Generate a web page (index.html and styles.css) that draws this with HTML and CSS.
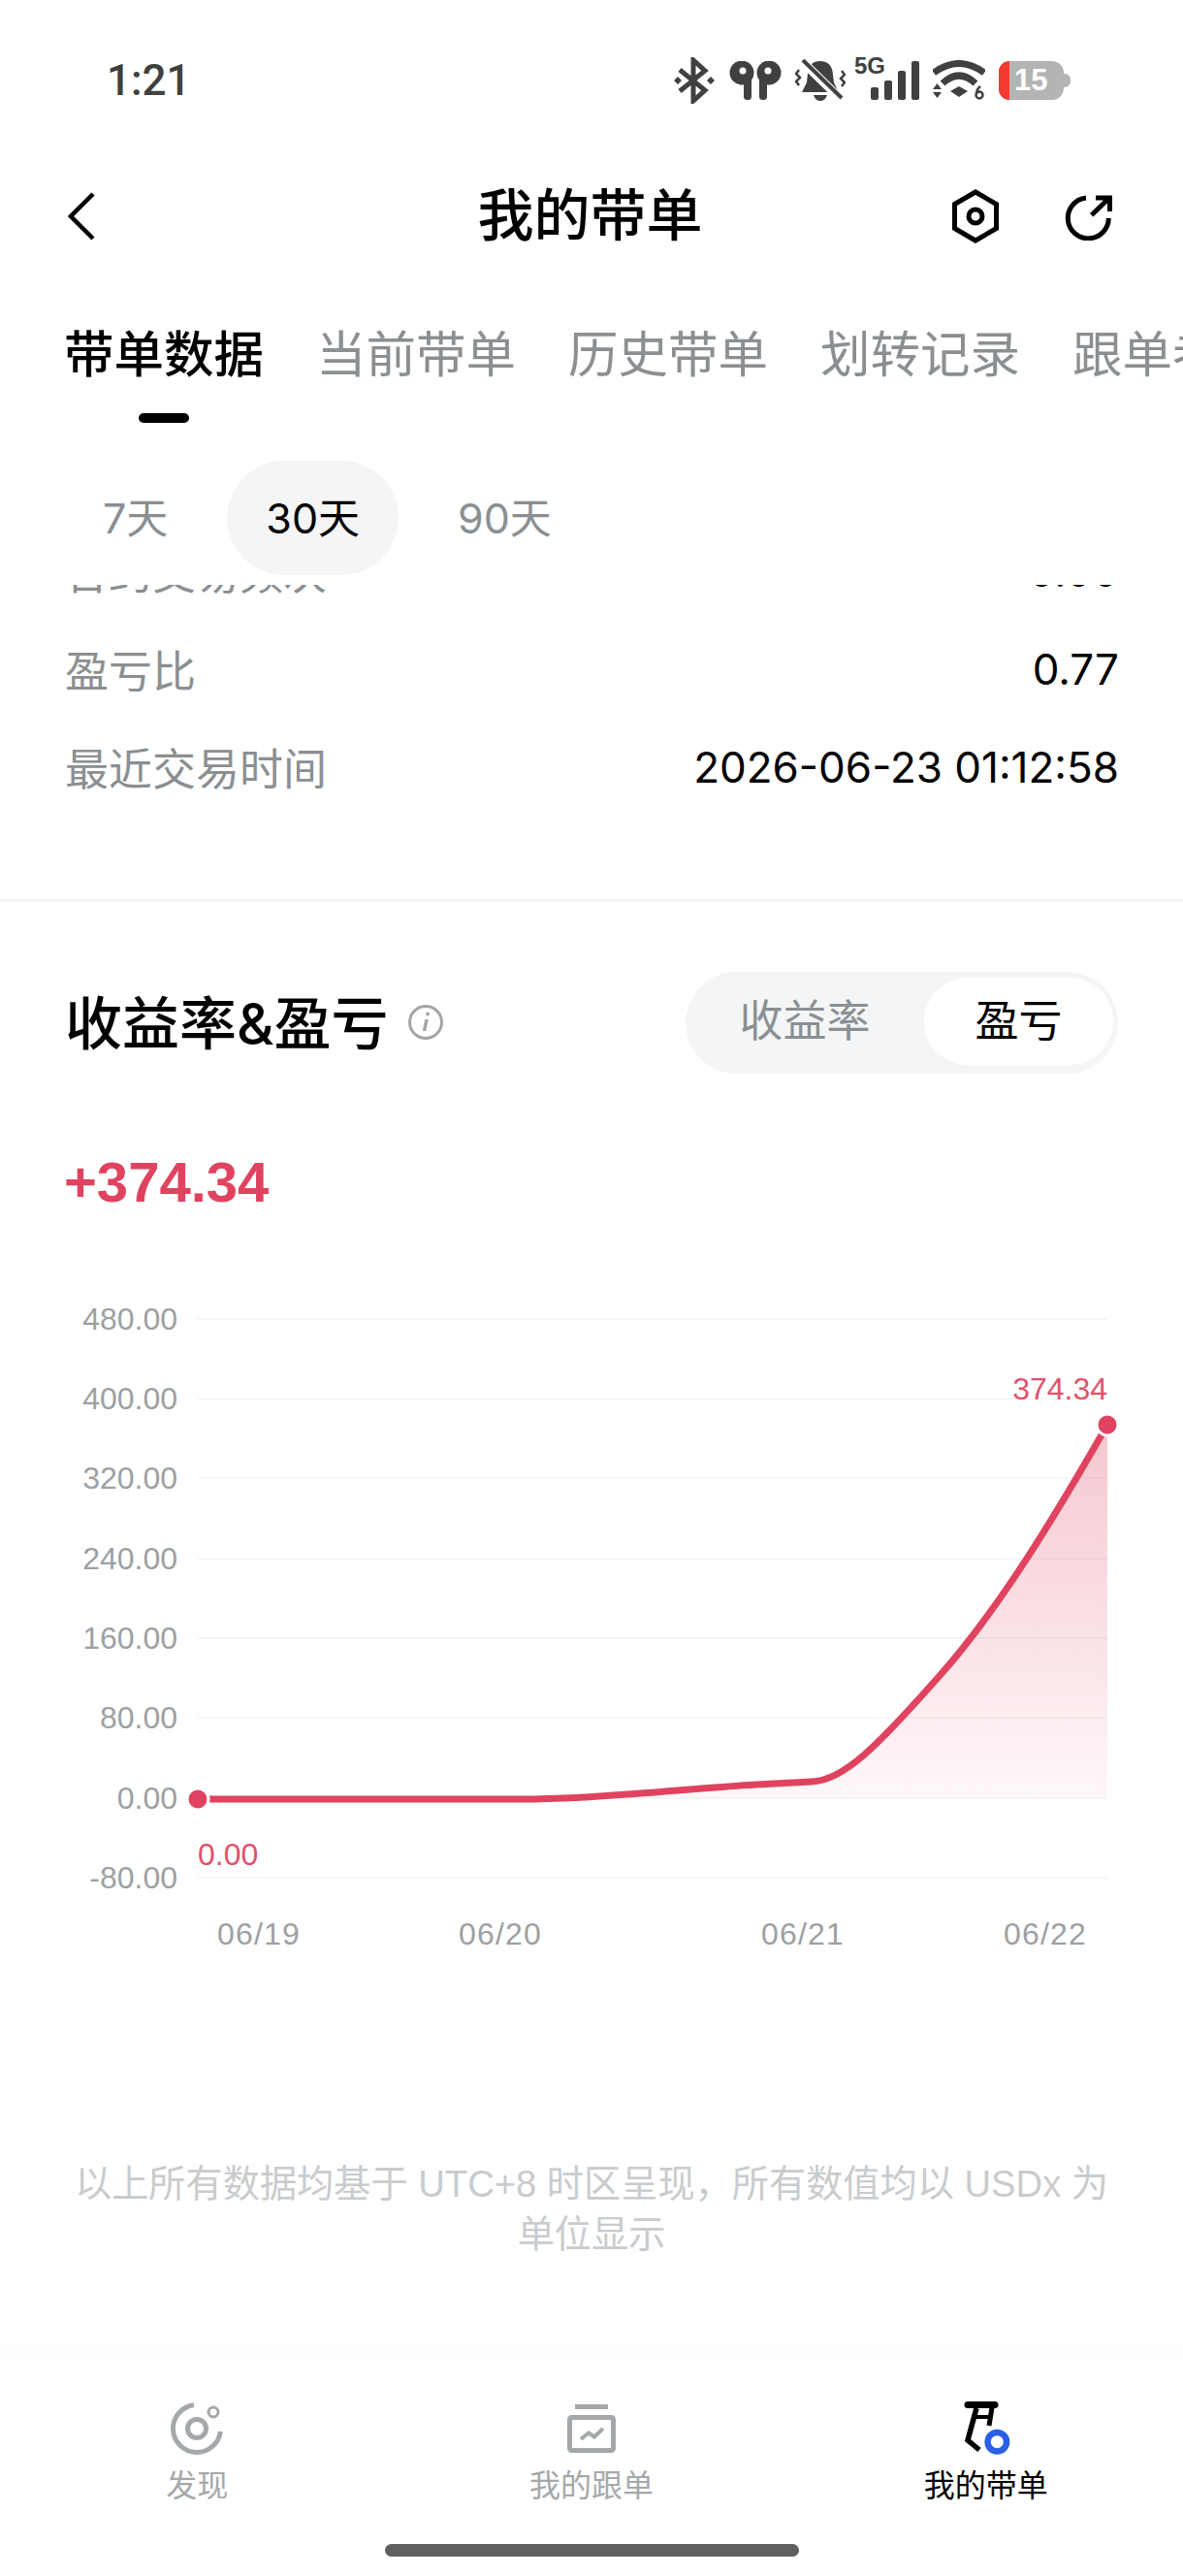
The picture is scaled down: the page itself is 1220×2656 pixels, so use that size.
FILE: index.html
```html
<!DOCTYPE html>
<html lang="zh-CN">
<head>
    <meta charset="UTF-8">
    <title>我的带单</title>
    <link rel="stylesheet" href="styles.css">
</head>
<body>

<div class="status-bar">
    <span class="status-time">1:21</span>
    <div class="status-icons">
        <svg width="44" height="48" viewBox="0 0 44 48" fill="none" stroke="#404040" stroke-width="5">
            <path d="M7 13 L33 34 L21 45 V3 L33 14 L7 35"/>
            <path d="M1 24 l4 -4 l4 4 l-4 4z M35 24 l4 -4 l4 4 l-4 4z" fill="#404040" stroke="none"/>
        </svg>
        <svg width="54" height="40" viewBox="0 0 54 40" fill="#404040">
            <circle cx="13" cy="12" r="12.500"/>
            <rect x="15" y="8" width="8" height="32" rx="3.500"/>
            <circle cx="41" cy="12" r="12.500"/>
            <rect x="31" y="8" width="8" height="32" rx="3.500"/>
            <circle cx="14" cy="10" r="3.500" fill="#fff"/>
            <circle cx="40" cy="10" r="3.500" fill="#fff"/>
        </svg>
        <svg width="52" height="44" viewBox="0 0 52 44" fill="none">
            <path d="M26 2 q12 0 13 14 l1 8 l5 10 h-38 l5 -10 l1 -9 q1 -13 13 -13z" fill="#404040"/>
            <path d="M19 37 h14 q-2 6 -7 6 q-5 0 -7 -6z" fill="#404040"/>
            <path d="M6 1 L46 40" stroke="#fff" stroke-width="9"/>
            <path d="M8 1 L48 40" stroke="#404040" stroke-width="4"/>
            <path d="M4 11 l-3 4 l4 4 l-4 4 l3 4 M48 12 l3 4 l-4 4 l4 4 l-3 4" stroke="#404040" stroke-width="2.500"/>
        </svg>
        <div class="signal">
            <span class="signal-label">5G</span>
            <svg width="50" height="40" viewBox="0 0 50 40" fill="#404040">
                <rect x="0" y="27" width="8" height="13" rx="2"/>
                <rect x="14" y="20" width="8" height="20" rx="2"/>
                <rect x="28" y="10" width="8" height="30" rx="2"/>
                <rect x="42" y="0" width="8" height="40" rx="2"/>
            </svg>
        </div>
        <svg width="54" height="42" viewBox="0 0 54 42" fill="none" stroke="#404040" stroke-width="7">
            <path d="M1 13 Q27 -6 53 13"/>
            <path d="M10 24 Q27 8 44 24"/>
            <path d="M18 32 L27 27 L36 32 L27 38Z" fill="#404040" stroke="none"/>
            <path d="M0 30 l4.500 -6 l4.500 6z M0 33 l4.500 6 l4.500 -6z" fill="#404040" stroke="none"/>
            <circle cx="48" cy="36" r="3.500" stroke-width="2.500"/>
            <path d="M45 35 q0 -5 4 -8" stroke-width="2.500"/>
        </svg>
        <div class="battery"><span class="battery-low"></span><span class="battery-num">15</span></div>
    </div>
</div>

<div class="nav-bar">
    <svg class="nav-back" width="28" height="50" viewBox="0 0 28 50" fill="none" stroke="#000" stroke-width="4.500">
        <path d="M26 2 L3 25 L26 48"/>
    </svg>
    <h1 class="nav-title">我的带单</h1>
    <div class="nav-actions">
        <svg width="50" height="56" viewBox="0 0 50 56" fill="none" stroke="#000" stroke-width="5">
            <path d="M25 3 L46.500 15.500 V40.500 L25 53 L3.500 40.500 V15.500 Z"/>
            <circle cx="25" cy="28" r="7"/>
        </svg>
        <svg width="50" height="50" viewBox="0 0 50 50" fill="none" stroke="#000" stroke-width="5">
            <path d="M23 6 A21 21 0 1 0 46.300 27"/>
            <path d="M28.700 23.700 L46 7 M33 6 H47.500 V20"/>
        </svg>
    </div>
</div>

<div class="tabs">
    <div class="tab tab-active">带单数据</div>
    <div class="tab">当前带单</div>
    <div class="tab">历史带单</div>
    <div class="tab">划转记录</div>
    <div class="tab">跟单者</div>
</div>

<div class="range">
    <div class="range-item">7天</div>
    <div class="range-item range-active">30天</div>
    <div class="range-item">90天</div>
</div>

<div class="scroll">
    <div class="stats">
        <div class="stat-row"><span class="stat-label">合约交易频次</span><span class="stat-value">0.00</span></div>
        <div class="stat-row"><span class="stat-label">盈亏比</span><span class="stat-value">0.77</span></div>
        <div class="stat-row"><span class="stat-label">最近交易时间</span><span class="stat-value">2026-06-23 01:12:58</span></div>
    </div>

    <div class="section">
        <div class="section-head">
            <h2 class="section-title">收益率&amp;盈亏</h2>
            <svg class="info-icon" width="38" height="38" viewBox="0 0 38 38" fill="none" stroke="#a3a6a8" stroke-width="3">
                <circle cx="19" cy="19" r="16.500"/>
                <path d="M20 16 L17.500 28" stroke-width="3.500"/>
                <circle cx="21" cy="10.500" r="2" fill="#a3a6a8" stroke="none"/>
            </svg>
            <div class="switch">
                <span class="switch-item">收益率</span>
                <span class="switch-item switch-active">盈亏</span>
            </div>
        </div>
        <div class="profit">+374.34</div>

        <svg class="chart" width="1220" height="700" viewBox="0 1320 1220 700">
            <defs>
                <linearGradient id="areaFill" x1="0" y1="0" x2="0" y2="1">
                    <stop offset="0" stop-color="#e0435f" stop-opacity="0.30"/>
                    <stop offset="1" stop-color="#e0435f" stop-opacity="0.04"/>
                </linearGradient>
            </defs>
            <g stroke="#f5f6f7" stroke-width="2">
                <path d="M204 1360 H1142"/>
                <path d="M204 1442 H1142"/>
                <path d="M204 1524 H1142"/>
                <path d="M204 1607 H1142"/>
                <path d="M204 1689 H1142"/>
                <path d="M204 1771 H1142"/>
                <path d="M204 1854 H1142"/>
                <path d="M204 1936 H1142"/>
            </g>
            <g class="axis-y" text-anchor="end">
                <text x="183" y="1371">480.00</text>
                <text x="183" y="1453">400.00</text>
                <text x="183" y="1535">320.00</text>
                <text x="183" y="1618">240.00</text>
                <text x="183" y="1700">160.00</text>
                <text x="183" y="1782">80.00</text>
                <text x="183" y="1865">0.00</text>
                <text x="183" y="1947">-80.00</text>
            </g>
            <g class="axis-x" text-anchor="middle">
                <text x="267" y="2005">06/19</text>
                <text x="516" y="2005">06/20</text>
                <text x="828" y="2005">06/21</text>
                <text x="1078" y="2005">06/22</text>
            </g>
            <path fill="url(#areaFill)" d="M545 1854 C620 1854 720 1843 780 1840 C800 1839 820 1838 837 1837 C870 1836 905 1800 967 1730 C1030 1660 1090 1560 1142 1469 V1854 Z"/>
            <path fill="none" stroke="#e0435f" stroke-width="7" d="M213 1855 H545 C620 1855 720 1843 780 1840 C800 1839 820 1838 837 1837 C870 1836 905 1800 967 1730 C1030 1660 1090 1560 1142 1469"/>
            <circle cx="204" cy="1855" r="11" fill="#e0435f" stroke="#fff" stroke-width="3"/>
            <circle cx="1142" cy="1469" r="11" fill="#e0435f" stroke="#fff" stroke-width="3"/>
            <text class="chart-mark" x="1142" y="1443" text-anchor="end">374.34</text>
            <text class="chart-mark" x="204" y="1923">0.00</text>
        </svg>

        <p class="note">以上所有数据均基于 UTC+8 时区呈现，所有数值均以 USDx 为单位显示</p>
    </div>
</div>

<div class="bottom-nav">
    <div class="bottom-item">
        <svg width="60" height="60" viewBox="0 0 60 60" fill="none" stroke="#a5a8aa" stroke-width="5">
            <path d="M27 5.700 A24.500 24.500 0 1 0 54.300 33"/>
            <circle cx="30" cy="30" r="9.500"/>
            <circle cx="47" cy="13" r="5" stroke-width="3"/>
        </svg>
        <span>发现</span>
    </div>
    <div class="bottom-item">
        <svg width="60" height="60" viewBox="0 0 60 60" fill="none" stroke="#a5a8aa" stroke-width="5">
            <path d="M13 7.500 H47"/>
            <rect x="7.500" y="18.500" width="45" height="34" rx="2"/>
            <path d="M19 41 L27 34.500 L33 38.500 L42 30" stroke-width="4"/>
        </svg>
        <span>我的跟单</span>
    </div>
    <div class="bottom-item bottom-active">
        <svg width="60" height="60" viewBox="0 0 60 60" fill="none" stroke="#000">
            <path d="M11 5.500 H39" stroke-width="7" stroke-linecap="round"/>
            <path d="M20 9 L11 42 L23 52" stroke-width="5.500"/>
            <path d="M36 8 L33 27" stroke-width="5"/>
            <path d="M18 18 H35" stroke-width="4"/>
            <circle cx="41.300" cy="43.700" r="9.800" stroke="#2a5fe6" stroke-width="6.500"/>
        </svg>
        <span>我的带单</span>
    </div>
</div>
<div class="home-bar"><span></span></div>

</body>
</html>
```

FILE: styles.css
```css
* { box-sizing: border-box; margin: 0; padding: 0 }
body {
    width: 1220px;
    height: 2656px;
    display: flex;
    flex-direction: column;
    overflow: hidden;
    background: #fff;
    color: #000;
    font-family: "Liberation Sans", "Noto Sans CJK SC", sans-serif;
}

/* 状态栏 */
.status-bar {
    height: 178px;
    flex: none;
    display: flex;
    justify-content: space-between;
    align-items: flex-start;
    padding: 56px 116px 0 110px;
}
.status-time {
    font-family: Roboto, sans-serif;
    font-size: 44px;
    font-weight: 500;
    line-height: 54px;
    color: #404040;
}
.status-icons {
    display: flex;
    align-items: center;
    gap: 14px;
    height: 54px;
}
.signal { position: relative; width: 50px; height: 40px; margin-left: 12px }
.signal-label {
    position: absolute;
    left: -17px;
    top: -7px;
    font-size: 24px;
    font-weight: 700;
    line-height: 24px;
    color: #404040;
}
.battery {
    position: relative;
    width: 67px;
    height: 40px;
    margin-right: 7px;
    border-radius: 11px 12px 12px 11px;
    background: #b4b4b4;
    display: flex;
    align-items: center;
    padding-left: 16px;
}
.battery::after {
    content: "";
    position: absolute;
    right: -7px;
    top: 13px;
    width: 7px;
    height: 14px;
    border-radius: 0 6px 6px 0;
    background: #b4b4b4;
}
.battery-low {
    position: absolute;
    left: 0;
    top: 0;
    bottom: 0;
    width: 11px;
    border-radius: 11px 0 0 11px;
    background: #f53a2f;
}
.battery-num {
    font-size: 31px;
    font-weight: 700;
    color: #fff;
}

/* 顶部导航 */
.nav-bar {
    height: 90px;
    flex: none;
    display: grid;
    grid-template-columns: 1fr auto 1fr;
    align-items: center;
    padding: 0 73px 0 70px;
}
.nav-title {
    font-size: 58px;
    font-weight: 500;
    line-height: 90px;
}
.nav-actions { display: flex; align-items: center; justify-content: flex-end; gap: 66px }

/* 标签页 */
.tabs {
    height: 145px;
    margin-top: 62px;
    flex: none;
    display: flex;
    gap: 54px;
    padding-left: 66px;
    overflow: hidden;
    white-space: nowrap;
}
.tab {
    position: relative;
    flex: none;
    font-size: 51.500px;
    line-height: 72px;
    color: #8b8f92;
}
.tab-active { color: #000; font-weight: 500 }
.tab-active::after {
    content: "";
    position: absolute;
    left: 77px;
    top: 96px;
    width: 52px;
    height: 10px;
    border-radius: 5px;
    background: #000;
}

/* 时间范围 */
.range {
    flex: none;
    height: 128px;
    display: flex;
    align-items: flex-start;
    gap: 21px;
    padding-left: 66px;
}
.range-item {
    padding: 0 40px;
    font-family: Inter, "Noto Sans CJK SC", sans-serif;
    font-size: 43px;
    line-height: 118px;
    color: #8b8f92;
}
.range-active { color: #000; background: #f3f5f6; border-radius: 59px }

/* 可滚动内容，最上面一行被遮住 */
.scroll { flex: 1; min-height: 0; overflow: hidden }
.stats {
    margin-top: -65px;
    padding: 0 66px 0 67px;
    height: 392px;
    border-bottom: 3px solid #f3f4f5;
}
.stat-row {
    height: 101px;
    display: flex;
    justify-content: space-between;
    align-items: center;
}
.stat-label { color: #8b8f92; font-size: 45px }
.stat-value { font-family: Inter, sans-serif; font-size: 44px }

.section { padding-top: 70px }
.section-head {
    display: flex;
    align-items: center;
    padding: 0 67px 0 67px;
    height: 108px;
}
.section-title {
    font-family: Inter, "Noto Sans CJK SC", sans-serif;
    font-size: 59px;
    font-weight: 500;
    padding-bottom: 5px;
}
.info-icon { margin-left: 19px }
.switch {
    margin-left: auto;
    width: 446px;
    height: 105px;
    padding: 6px 5px 9px 0;
    display: flex;
    border-radius: 53px;
    background: #f3f5f6;
}
.switch-item {
    flex: 1;
    font-size: 45px;
    line-height: 92px;
    text-align: center;
    color: #8b8f92;
}
.switch-active {
    flex: none;
    width: 195px;
    height: 90px;
    color: #000;
    background: #fff;
    border-radius: 45px;
}
.profit {
    margin-top: 78px;
    padding-left: 66px;
    font-size: 58px;
    font-weight: 700;
    line-height: 66px;
    color: #e0435f;
}
.chart { display: block; margin-top: 68px; margin-bottom: -40px }
.chart text { font-family: "Liberation Sans", sans-serif; font-size: 32px }
.axis-y text, .axis-x text { fill: #9da0a3 }
.axis-x text { letter-spacing: 1.2px }
.chart-mark { fill: #e0526c }
.note {
    margin-top: 246px;
    padding: 0 70px;
    font-size: 38.2px;
    line-height: 52px;
    text-align: center;
    color: #c9cbcd;
}

/* 底部导航 */
.bottom-nav {
    flex: none;
    height: 176px;
    padding-top: 42px;
    display: grid;
    grid-template-columns: repeat(3, 1fr);
    background: #fff;
    box-shadow: 0 -8px 16px rgba(0,0,0,0.02);
}
.bottom-item {
    display: flex;
    flex-direction: column;
    align-items: center;
    gap: 7px;
    font-size: 32px;
    line-height: 44px;
    color: #a5a8aa;
}
.bottom-active { color: #000 }
.home-bar {
    flex: none;
    height: 48px;
    display: flex;
    justify-content: center;
    padding-top: 15px;
}
.home-bar span {
    width: 427px;
    height: 13px;
    border-radius: 7px;
    background: #5f5f5f;
}
```
